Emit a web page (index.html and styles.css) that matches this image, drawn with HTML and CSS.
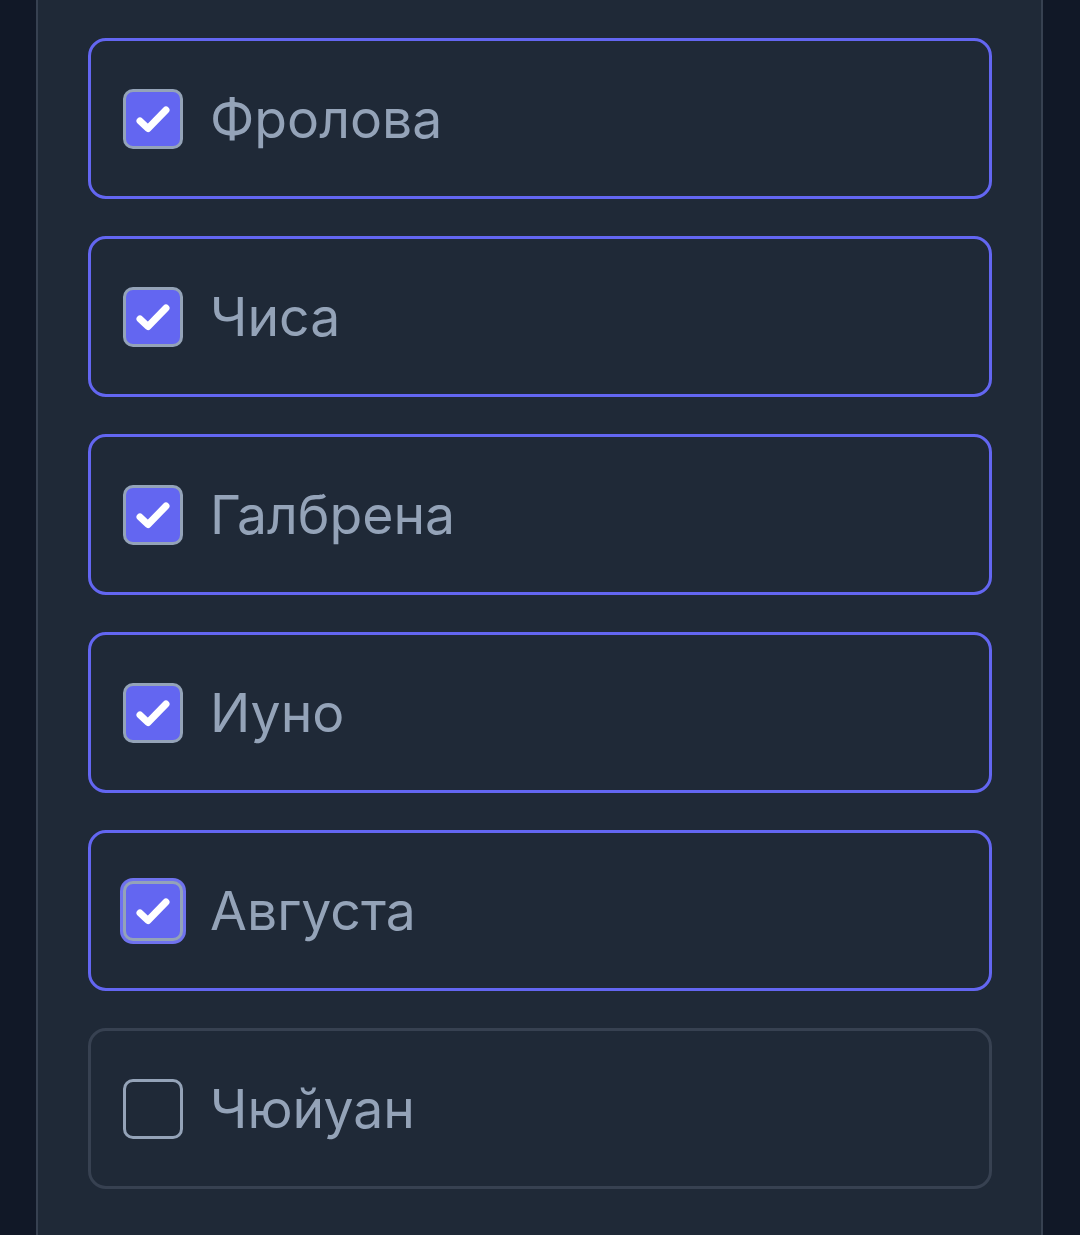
FILE: index.html
```html
<!DOCTYPE html>
<html lang="ru">
<head>
<meta charset="utf-8">
<link rel="stylesheet" href="styles.css">
</head>
<body>
<div class="panel">
  <label class="option checked">
    <span class="box"><svg viewBox="0 0 60 60"><polyline points="17,32 25,39.5 43,21"/></svg></span>
    <span class="name">Фролова</span>
  </label>
  <label class="option checked">
    <span class="box"><svg viewBox="0 0 60 60"><polyline points="17,32 25,39.5 43,21"/></svg></span>
    <span class="name">Чиса</span>
  </label>
  <label class="option checked">
    <span class="box"><svg viewBox="0 0 60 60"><polyline points="17,32 25,39.5 43,21"/></svg></span>
    <span class="name">Галбрена</span>
  </label>
  <label class="option checked">
    <span class="box"><svg viewBox="0 0 60 60"><polyline points="17,32 25,39.5 43,21"/></svg></span>
    <span class="name">Иуно</span>
  </label>
  <label class="option checked">
    <span class="box focus"><svg viewBox="0 0 60 60"><polyline points="17,32 25,39.5 43,21"/></svg></span>
    <span class="name">Августа</span>
  </label>
  <label class="option">
    <span class="box"></span>
    <span class="name">Чюйуан</span>
  </label>
</div>
</body>
</html>
```

FILE: styles.css
```css
html, body {
  margin: 0;
  padding: 0;
  background: #111827;
  height: 100%;
  overflow: hidden;
}

.panel {
  margin-left: 36px;
  width: 1007px;
  min-height: 1235px;
  box-sizing: border-box;
  background: #1f2937;
  border-left: 2px solid #374151;
  border-right: 2px solid #374151;
  padding: 38px 49px 0 50px;
  display: flex;
  flex-direction: column;
  gap: 37px;
  font-family: Inter, "Noto Sans", sans-serif;
}

.option {
  display: flex;
  align-items: center;
  gap: 27px;
  height: 161px;
  box-sizing: border-box;
  border: 3px solid #374151;
  border-radius: 18px;
  padding-left: 32px;
}

.option.checked {
  border-color: #6366f1;
}

.box {
  width: 60px;
  height: 60px;
  box-sizing: border-box;
  border: 3px solid #94a3b8;
  border-radius: 10px;
  flex: none;
  display: block;
  position: relative;
}

.checked .box {
  background: #6366f1;
}

.box svg {
  position: absolute;
  left: -3px;
  top: -3px;
  width: 60px;
  height: 60px;
}

.box polyline {
  fill: none;
  stroke: #ffffff;
  stroke-width: 7;
  stroke-linecap: round;
  stroke-linejoin: round;
}

.box.focus {
  box-shadow: 0 0 0 3px #6f72ee;
}

.name {
  color: #94a3b8;
  font-size: 53.5px;
  line-height: 1;
}
```
